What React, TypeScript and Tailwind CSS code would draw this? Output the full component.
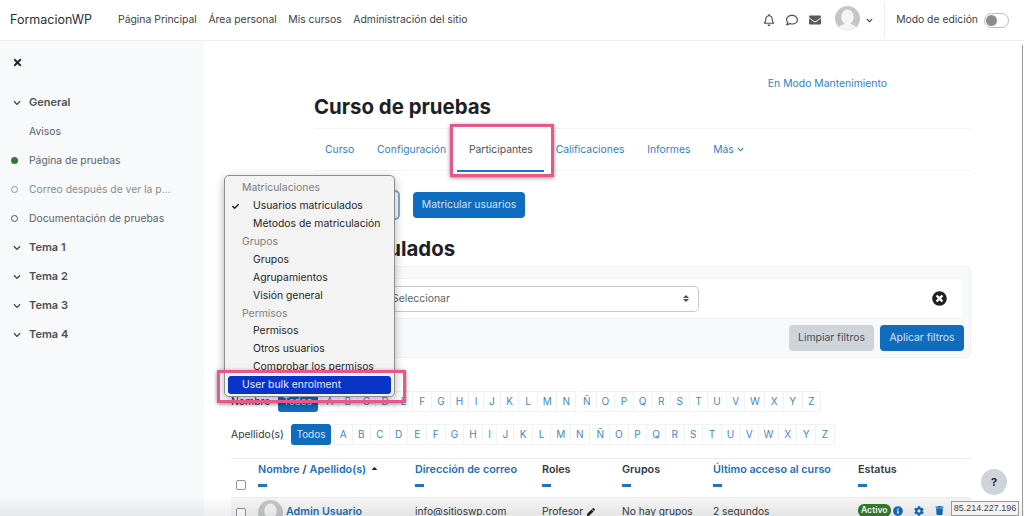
import React from "react";
import { FaRegBell, FaRegComment, FaEnvelope, FaChevronDown, FaCheck, FaPen, FaInfoCircle, FaCog, FaTrash, FaTimes, FaTimesCircle, FaSortUp } from "react-icons/fa";

const letters = "A B C D E F G H I J K L M N Ñ O P Q R S T U V W X Y Z".split(" ");

function Avatar({ size, id }: { size: number; id: string }) {
  return (
    <svg width={size} height={size} viewBox="0 0 32 32" className="shrink-0">
      <defs>
        <clipPath id={id}><circle cx="16" cy="16" r="16" /></clipPath>
      </defs>
      <g clipPath={`url(#${id})`}>
        <rect width="32" height="32" fill="#c4c5c6" />
        <ellipse cx="16" cy="14" rx="8" ry="9.5" fill="#f4f4f4" />
        <path d="M3 32c1-7 6-9 13-9s12 2 13 9z" fill="#f4f4f4" />
      </g>
    </svg>
  );
}

function letterWidth(l: string) {
  if (l === "I") return "w-[14.5px]";
  if (l === "J") return "w-[17px]";
  if (l === "M") return "w-[19.5px]";
  if (l === "W") return "w-[20px]";
  return "w-[18.6px]";
}

function LetterBar({ label, w }: { label: string; w: string }) {
  return (
    <div className="-ml-[83px] flex items-center">
      <span className={`${w} text-[10.4px] text-[#343a40]`}>{label}</span>
      <span className="flex h-[21px] w-[40px] items-center justify-center rounded-[3px] bg-[#0f6cbf] text-[10px] text-[#d5e5f4]">Todos</span>
      <div className="ml-[3px] flex">
        {letters.map((l) => (
          <span
            key={l}
            className={`flex h-[21px] items-center justify-center border border-l-0 border-[#f1f2f4] text-[10px] text-[#3f87c9] first:border-l ${letterWidth(l)} ${
              l === "Ñ" ? "ml-[2px] border-l" : ""
            }`}
          >
            {l}
          </span>
        ))}
      </div>
    </div>
  );
}

function SideHead({ t }: { t: string }) {
  return (
    <div className="flex h-[29px] items-center text-[11px] font-semibold text-[#495057]">
      <FaChevronDown size={8} className="ml-[13px] mr-[8px] text-[#3a4046]" />
      {t}
    </div>
  );
}

function SideItem({ t, dot, muted }: { t: string; dot?: "green" | "ring"; muted?: boolean }) {
  return (
    <div className={`flex h-[29px] items-center text-[10.35px] ${muted ? "text-[#868d94]" : "text-[#5c6369]"}`}>
      <span className="flex w-[29px] justify-center px-[6px]">
        {dot === "green" && <span className="h-[7px] w-[7px] rounded-full bg-[#357a32]" />}
        {dot === "ring" && <span className={`h-[7px] w-[7px] rounded-full border ${muted ? "border-[#8f969c]" : "border-[#4d5359]"}`} />}
      </span>
      {t}
    </div>
  );
}

function Head({ t, link, className }: { t: React.ReactNode; link?: boolean; className: string }) {
  return (
    <div className={className}>
      <div className={`whitespace-nowrap text-[10.75px] font-semibold leading-[14px] ${link ? "text-[#1a70bd]" : "text-[#343a40]"}`}>{t}</div>
      <div className="mt-[7px] h-[2.5px] w-[9px] bg-[#1f75c2]" />
    </div>
  );
}

function MenuGroup({ t }: { t: string }) {
  return <div className="flex h-[18px] items-center pl-[17px] text-[10.4px] text-[#7d7d7d]">{t}</div>;
}
function MenuItem({ t, checked }: { t: string; checked?: boolean }) {
  return (
    <div className="relative flex h-[18px] items-center pl-[28px] text-[10.4px] text-[#262626]">
      {checked && <FaCheck size={7} className="absolute left-[7px] top-[6px] text-[#222]" />}
      {t}
    </div>
  );
}

export default function App() {
  return (
    <div className="relative flex h-[516px] w-[1024px] flex-col overflow-hidden bg-white font-['Inter','Liberation_Sans',sans-serif]">
      <header className="flex h-[41px] shrink-0 items-center border-b border-[#eceef0] bg-white pl-[10px]">
        <span className="w-[83px] text-[12.5px] text-[#2b3035]">FormacionWP</span>
        <nav className="ml-[25px] flex gap-[11.5px] text-[10.4px] text-[#3c4247]">
          <span>Página Principal</span>
          <span>Área personal</span>
          <span>Mis cursos</span>
          <span>Administración del sitio</span>
        </nav>
        <div className="ml-auto flex items-center">
          <FaRegBell size={12} className="text-[#4a4f54]" />
          <FaRegComment size={12} className="ml-[11px] text-[#4a4f54]" />
          <FaEnvelope size={12} className="ml-[11px] text-[#565b60]" />
          <span className="-mt-[4px] ml-[14px]"><Avatar size={25} id="a1" /></span>
          <FaChevronDown size={7} className="ml-[6px] text-[#33383d]" />
          <span className="ml-[11px] h-[34px] w-px bg-[#eceef0]" />
          <span className="ml-[11.5px] text-[10.35px] text-[#3c4247]">Modo de edición</span>
          <span className="ml-[6px] mr-[15px] flex h-[15px] w-[25px] items-center rounded-full border border-[#b8bcc0] bg-white pl-px">
            <span className="h-[11px] w-[11px] rounded-full bg-[#878c91]" />
          </span>
        </div>
      </header>

      <div className="flex min-h-0 flex-1">
        <aside className="w-[204px] shrink-0 bg-[#f8f9fa] pt-[11px]">
          <div className="ml-[12px] flex h-[20px] items-center text-[#212529]"><FaTimes size={11} /></div>
          <div className="mt-[16px]">
            <SideHead t="General" />
            <SideItem t="Avisos" />
            <SideItem t="Página de pruebas" dot="green" />
            <SideItem t="Correo después de ver la p..." dot="ring" muted />
            <SideItem t="Documentación de pruebas" dot="ring" />
            <SideHead t="Tema 1" />
            <SideHead t="Tema 2" />
            <SideHead t="Tema 3" />
            <SideHead t="Tema 4" />
          </div>
        </aside>

        <main className="min-w-0 flex-1 pl-[110px] pt-[36px]">
          <div className="w-[657px]">
            <div className="pr-[84px] text-right text-[10.4px] leading-[14px] text-[#2f7fc9]">En Modo Mantenimiento</div>
            <h1 className="mt-[3px] text-[20.4px] font-bold leading-[26px] text-[#1d2125]">Curso de pruebas</h1>
            <nav className="mt-[8px] flex h-[43px] items-center gap-[22.8px] border-y border-[#f3f4f5] pl-[11px] text-[10.35px] text-[#2f7fc9]">
              <span>Curso</span>
              <span>Configuración</span>
              <span className="relative text-[#4a5056]">
                Participantes
                <span className="absolute -bottom-[15px] -left-[11.5px] -right-[11.5px] h-[2px] bg-[#1f75c2]" />
              </span>
              <span>Calificaciones</span>
              <span>Informes</span>
              <span className="flex items-center gap-[3px]">Más<FaChevronDown size={7} /></span>
            </nav>
            <div className="mt-[20px] flex h-[27px] items-center">
              <span className="ml-[79px] h-[30px] w-[7px] rounded-r-[5px] border-2 border-l-0 border-[#7cabd8]" />
              <span className="ml-[13px] flex h-[26px] w-[112px] items-center justify-center rounded-[4px] bg-[#0f6cbf] text-[10.4px] text-[#cfe1f2]">Matricular usuarios</span>
            </div>
            <h2 className="ml-[10px] mt-[18px] whitespace-nowrap text-[20.4px] font-bold leading-[26px] text-[#1d2125]">Matriculados</h2>
            <section className="mt-[4px] rounded-[5px] border border-[#eff0f2] bg-[#f8f9fa] px-[6px] pb-[6px] pt-[11px]">
              <div className="flex h-[41px] items-center rounded-[3px] border border-[#f1f2f3] bg-white pr-[16px]">
                <div className="ml-[70px] flex h-[26px] w-[307px] items-center justify-between rounded-r-[5px] border border-l-0 border-[#c4c8cc] pr-[9px] text-[10.4px] text-[#5d6369]">
                  <span>Seleccionar</span>
                  <span className="flex flex-col gap-[1px]">
                    <span className="h-0 w-0 border-x-[3px] border-b-[3px] border-x-transparent border-b-[#4c5157]" />
                    <span className="h-0 w-0 border-x-[3px] border-t-[3px] border-x-transparent border-t-[#4c5157]" />
                  </span>
                </div>
                <FaTimesCircle size={15} className="ml-auto text-[#1d2125]" />
              </div>
              <div className="mt-[6px] flex justify-end gap-[6px] text-[10.4px]">
                <span className="flex h-[26px] w-[85px] items-center justify-center rounded-[4px] bg-[#ced4da] text-[#4a5056]">Limpiar filtros</span>
                <span className="flex h-[26px] w-[84px] items-center justify-center rounded-[4px] bg-[#0f6cbf] text-[#d5e5f4]">Aplicar filtros</span>
              </div>
            </section>
            <div className="mt-[33px] flex flex-col gap-[12px]">
              <LetterBar label="Nombre" w="w-[46.5px]" />
              <LetterBar label="Apellido(s)" w="w-[60px]" />
            </div>
            <div className="-ml-[83px] mt-[13px] w-[740px]">
              <div className="flex h-[40px] border-y border-[#e9ecef] pt-[4px]">
                <span className="ml-[5px] mt-[17px] h-[10px] w-[10px] rounded-[2px] border border-[#8f959b] bg-white" />
                <Head
                  className="ml-[12px] w-[157px]"
                  link
                  t={
                    <span className="inline-flex items-center">
                      Nombre <span className="mx-[3px] text-[#343a40]">/</span> Apellido(s)
                      <FaSortUp size={9} className="ml-[4px] text-[#212529]" />
                    </span>
                  }
                />
                <Head className="w-[127px]" link t="Dirección de correo" />
                <Head className="w-[80px]" t="Roles" />
                <Head className="w-[91px]" t="Grupos" />
                <Head className="w-[145px]" link t="Último acceso al curso" />
                <Head className="w-[80px]" t="Estatus" />
              </div>
              <div className="flex h-[30px] items-start bg-[#f6f6f6] pt-[6px] text-[10.2px] text-[#343a40]">
                <span className="ml-[5px] mt-[4px] h-[10px] w-[10px] rounded-[2px] border border-[#8f959b] bg-white" />
                <span className="ml-[12px] flex w-[157px] items-start gap-[3px] text-[10.7px] font-semibold text-[#1a70bd]">
                  <span className="-mt-[4px]"><Avatar size={25} id="a2" /></span>
                  Admin Usuario
                </span>
                <span className="w-[127px]">info@sitioswp.com</span>
                <span className="flex w-[80px] items-center gap-[4px]">Profesor <FaPen size={8} className="text-[#222]" /></span>
                <span className="w-[91px]">No hay grupos</span>
                <span className="w-[145px]">2 segundos</span>
                <span className="flex items-center">
                  <span className="rounded-[6px] bg-[#357a32] px-[3px] text-[8.6px] font-semibold leading-[13px] text-white">Activo</span>
                  <FaInfoCircle size={10} className="ml-[2px] text-[#0f6cbf]" />
                  <FaCog size={10} className="ml-[11px] text-[#0f6cbf]" />
                  <FaTrash size={9} className="ml-[11px] text-[#0f6cbf]" />
                </span>
              </div>
            </div>
          </div>
        </main>
      </div>

      {/* vignette at the bottom edge and the right hand line */}
      <div className="pointer-events-none absolute bottom-0 left-0 h-[20px] w-full bg-gradient-to-b from-transparent to-[#00000012]" />
      <div className="absolute bottom-0 right-[1px] top-[45px] w-px bg-[#9a9a9a]" />

      {/* help and ip */}
      <div className="absolute left-[981px] top-[469px] flex h-[26px] w-[26px] items-center justify-center rounded-full bg-[#ced4da] text-[11px] font-bold text-[#212529]">?</div>
      <div className="absolute left-[951px] top-[501px] flex h-[15px] w-[68px] items-center justify-center border border-[#9a9a9a] bg-[#f4f4f4] font-['Liberation_Sans',sans-serif] text-[9px] text-[#444]">85.214.227.196</div>

      {/* native select menu */}
      <div className="absolute left-[224px] top-[175px] z-10 h-[222px] w-[171px] rounded-[5px] border border-[#8e8e8e] bg-[#f3f3f3] pt-[3px] shadow-[0_3px_10px_rgba(0,0,0,0.3)]">
        <MenuGroup t="Matriculaciones" />
        <MenuItem t="Usuarios matriculados" checked />
        <MenuItem t="Métodos de matriculación" />
        <MenuGroup t="Grupos" />
        <MenuItem t="Grupos" />
        <MenuItem t="Agrupamientos" />
        <MenuItem t="Visión general" />
        <MenuGroup t="Permisos" />
        <div className="-mt-px">
          <MenuItem t="Permisos" />
        </div>
        <MenuItem t="Otros usuarios" />
        <MenuItem t="Comprobar los permisos" />
        <div className="mx-[3px] flex h-[18px] items-center rounded-[3px] bg-[#0a34c8] pl-[14px] text-[10.4px] text-[#e6ebff]">User bulk enrolment</div>
      </div>

      {/* pink highlight frames */}
      <div className="absolute left-[450px] top-[124px] h-[53px] w-[104px] border-[3px] border-[#e8578c] shadow-[0_1px_4px_rgba(0,0,0,0.45)]" />
      <div className="absolute left-[217px] top-[370px] z-20 h-[33px] w-[189px] border-[3px] border-[#e8578c] shadow-[0_1px_4px_rgba(0,0,0,0.45)]" />
    </div>
  );
}
